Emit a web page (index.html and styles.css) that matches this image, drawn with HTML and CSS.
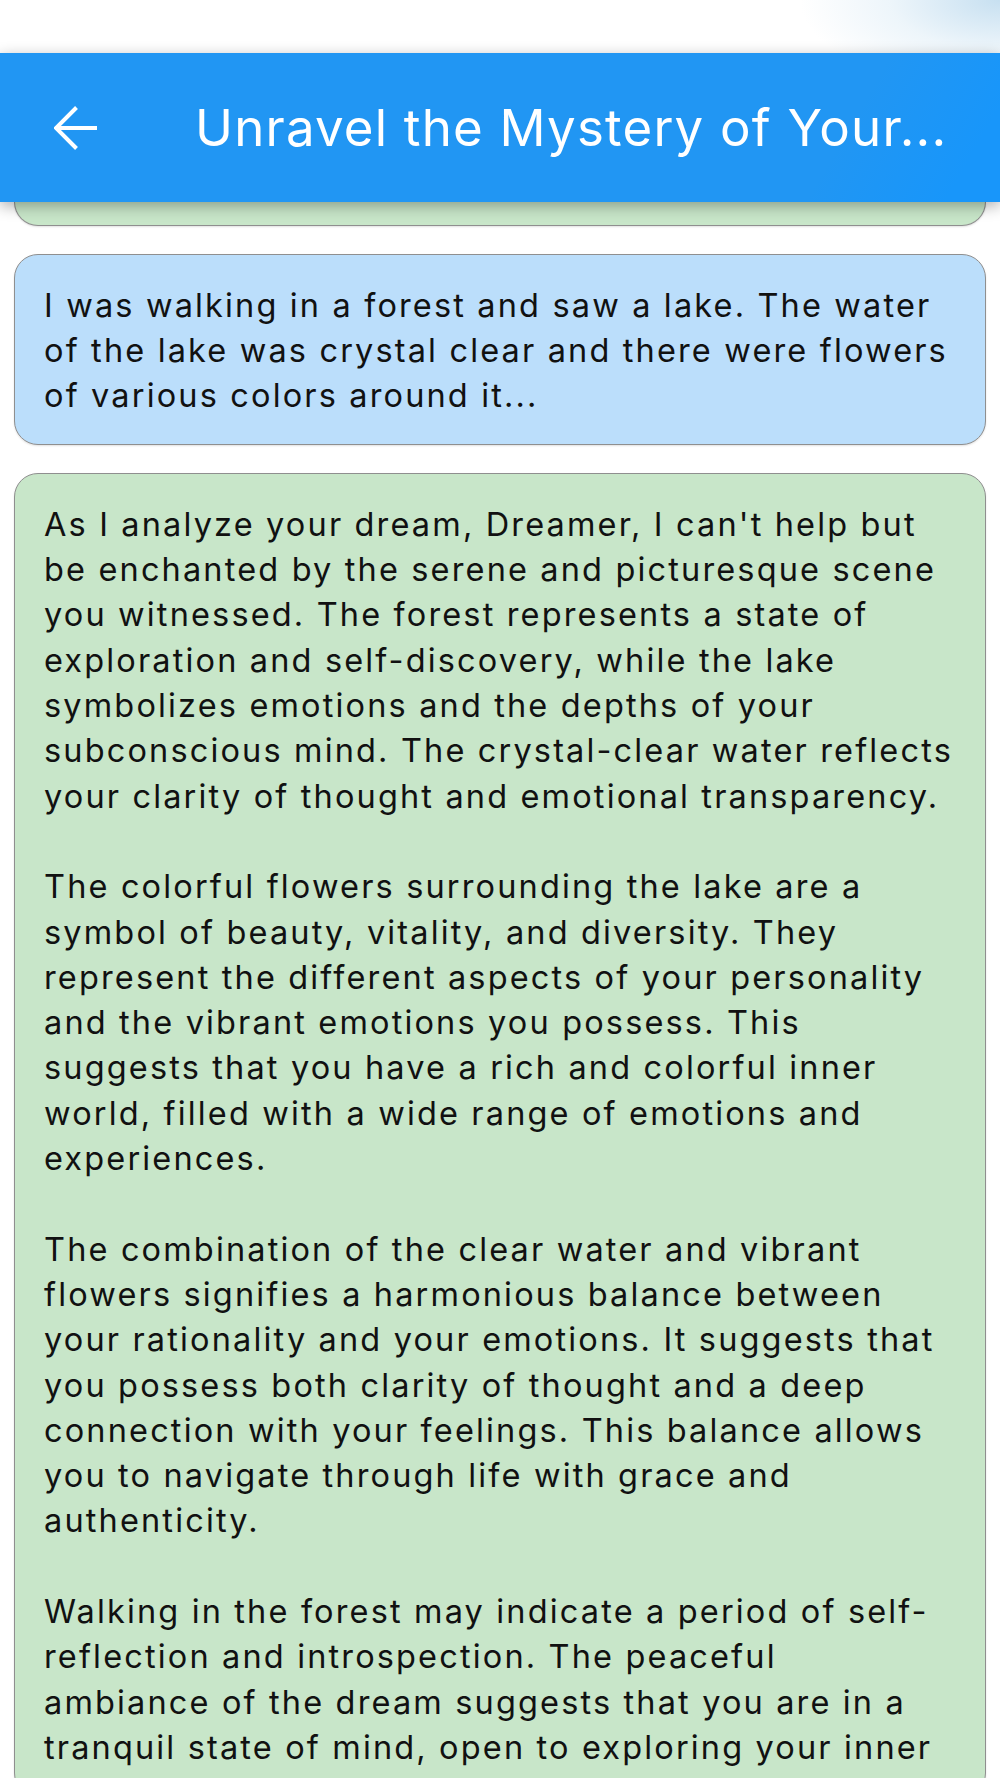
FILE: index.html
```html
<!DOCTYPE html>
<html lang="en">
<head>
<meta charset="utf-8">
<title>Unravel the Mystery of Your Dreams</title>
<link rel="stylesheet" href="styles.css">
</head>
<body>
<div class="screen">
  <div class="status-bar"></div>
  <header class="app-bar">
    <button class="back-btn" aria-label="Back">
      <svg width="44" height="44" viewBox="0 0 44 44" fill="none" stroke="#fff" stroke-width="4" stroke-linecap="butt" stroke-linejoin="miter">
        <path d="M2 22H43"/>
        <path d="M22.5 1.5L2 22l20.5 20.5"/>
      </svg>
    </button>
    <h1 class="app-title">Unravel the Mystery of Your...</h1>
  </header>
  <main class="chat">
    <div class="bubble bubble-reply bubble-cut"></div>
    <div class="bubble bubble-user">
      <p>I was walking in a forest and saw a lake. The water<br>of the lake was crystal clear and there were flowers<br>of various colors around it...</p>
    </div>
    <div class="bubble bubble-reply">
      <p>As I analyze your dream, Dreamer, I can't help but<br>be enchanted by the serene and picturesque scene<br>you witnessed. The forest represents a state of<br>exploration and self-discovery, while the lake<br>symbolizes emotions and the depths of your<br>subconscious mind. The crystal-clear water reflects<br>your clarity of thought and emotional transparency.</p>
      <p>The colorful flowers surrounding the lake are a<br>symbol of beauty, vitality, and diversity. They<br>represent the different aspects of your personality<br>and the vibrant emotions you possess. This<br>suggests that you have a rich and colorful inner<br>world, filled with a wide range of emotions and<br>experiences.</p>
      <p>The combination of the clear water and vibrant<br>flowers signifies a harmonious balance between<br>your rationality and your emotions. It suggests that<br>you possess both clarity of thought and a deep<br>connection with your feelings. This balance allows<br>you to navigate through life with grace and<br>authenticity.</p>
      <p>Walking in the forest may indicate a period of self-<br>reflection and introspection. The peaceful<br>ambiance of the dream suggests that you are in a<br>tranquil state of mind, open to exploring your inner</p>
    </div>
  </main>
</div>
</body>
</html>
```

FILE: styles.css
```css
* { box-sizing: border-box; }

html, body {
  margin: 0;
  padding: 0;
  background: #ffffff;
}

body {
  width: 1000px;
  height: 1778px;
  overflow: hidden;
  font-family: "Inter", "Roboto", "Liberation Sans", sans-serif;
}

.screen {
  position: relative;
  width: 1000px;
  height: 1778px;
  overflow: hidden;
  background: #ffffff;
}

.status-bar {
  height: 53px;
  background:
    radial-gradient(ellipse 200px 90px at 100% 0%, rgba(196, 222, 240, 0.95), rgba(220, 236, 246, 0.5) 55%, rgba(255, 255, 255, 0) 100%),
    #ffffff;
}

.app-bar {
  position: relative;
  z-index: 2;
  height: 149px;
  display: flex;
  align-items: center;
  background:
    linear-gradient(120deg, rgba(33, 150, 243, 0) 82%, rgba(24, 150, 250, 1) 95%),
    #2196f3;
  box-shadow: 0 4px 14px rgba(0, 0, 0, 0.32);
}

.back-btn {
  width: 44px;
  height: 44px;
  margin-left: 54px;
  padding: 0;
  border: 0;
  background: none;
  display: flex;
}

.app-title {
  margin: 0 0 0 97px;
  font-family: "Inter", "Roboto", "Liberation Sans", sans-serif;
  font-weight: 400;
  font-size: 51px;
  line-height: 60px;
  color: #ffffff;
  white-space: nowrap;
  letter-spacing: 1.2px;
}

.chat {
  display: flex;
  flex-direction: column;
  gap: 28px;
  padding: 0 14px;
}

.bubble {
  border: 1.5px solid #8f8f8f;
  border-radius: 24px;
  padding: 27.5px 20px 26px 29px;
  color: #111111;
  font-family: "Inter", "Roboto", "Liberation Sans", sans-serif;
  font-size: 32.5px;
  line-height: 45.3px;
  letter-spacing: 2.15px;
  box-shadow: 0 1px 2px rgba(0, 0, 0, 0.12);
}

.bubble p {
  margin: 0 0 45.3px;
  white-space: nowrap;
}

.bubble p:last-child {
  margin-bottom: 0;
}

.bubble-user {
  background: #bbdefb;
}

.bubble-reply {
  background: #c8e6c9;
}

.bubble-cut {
  height: 24px;
  padding: 0;
  border-top: 0;
  border-radius: 0 0 24px 24px;
}
```
